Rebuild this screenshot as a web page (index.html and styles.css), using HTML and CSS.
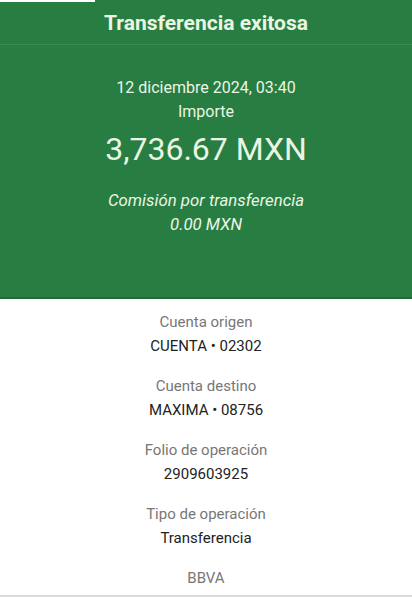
FILE: index.html
```html
<!DOCTYPE html>
<html lang="es">
<head>
    <meta charset="UTF-8">
    <meta name="viewport" content="width=device-width, initial-scale=1.0">
    <title>Transferencia exitosa</title>
    <link rel="stylesheet" href="styles.css">
</head>
<body>
    <div class="status-strip"></div>
    <div class="hero">
        <h1 class="title">Transferencia exitosa</h1>
        <div class="summary">
            <p class="date">12 diciembre 2024, 03:40</p>
            <p class="label">Importe</p>
            <p class="amount">3,736.67 MXN</p>
            <p class="fee">Comisión por transferencia</p>
            <p class="fee">0.00 MXN</p>
        </div>
    </div>

    <div class="details">
        <div class="item">
            <span class="item-label">Cuenta origen</span>
            <span class="item-value">CUENTA • 02302</span>
        </div>
        <div class="item">
            <span class="item-label">Cuenta destino</span>
            <span class="item-value">MAXIMA • 08756</span>
        </div>
        <div class="item">
            <span class="item-label">Folio de operación</span>
            <span class="item-value">2909603925</span>
        </div>
        <div class="item">
            <span class="item-label">Tipo de operación</span>
            <span class="item-value">Transferencia</span>
        </div>
        <div class="item">
            <span class="item-label">BBVA</span>
        </div>
    </div>
</body>
</html>
```

FILE: styles.css
```css
body {
    margin: 0;
    height: 597px;
    overflow: hidden;
    background: #fff;
    font-family: Roboto, "Noto Sans", sans-serif;
    text-align: center;
    border-bottom: 2px solid #dcdcdc;
    box-sizing: border-box;
}
.status-strip {
    position: absolute;
    top: 0;
    left: 0;
    width: 95px;
    height: 2px;
    background: #fff;
}
.hero {
    background: #287d42;
    color: #eaf6e4;
    height: 299px;
    border-bottom: 2px solid #1f6a35;
    box-sizing: border-box;
}
.title {
    margin: 0;
    height: 44px;
    line-height: 46px;
    font-size: 21px;
    font-weight: 700;
    border-bottom: 1px solid #3a8a51;
}
.summary {
    padding-top: 31px;
}
.summary p {
    margin: 0;
    font-size: 16px;
    line-height: 24px;
}
.amount {
    font-size: 32px !important;
    line-height: 50px !important;
    margin-bottom: 14px !important;
}
.fee {
    font-style: italic;
    font-size: 16.8px !important;
}
.details {
    display: flex;
    flex-direction: column;
    gap: 16px;
    padding-top: 11px;
}
.item {
    display: flex;
    flex-direction: column;
    font-size: 15px;
    line-height: 24px;
}
.item-label {
    color: #777;
}
.item-value {
    color: #222;
}
```
